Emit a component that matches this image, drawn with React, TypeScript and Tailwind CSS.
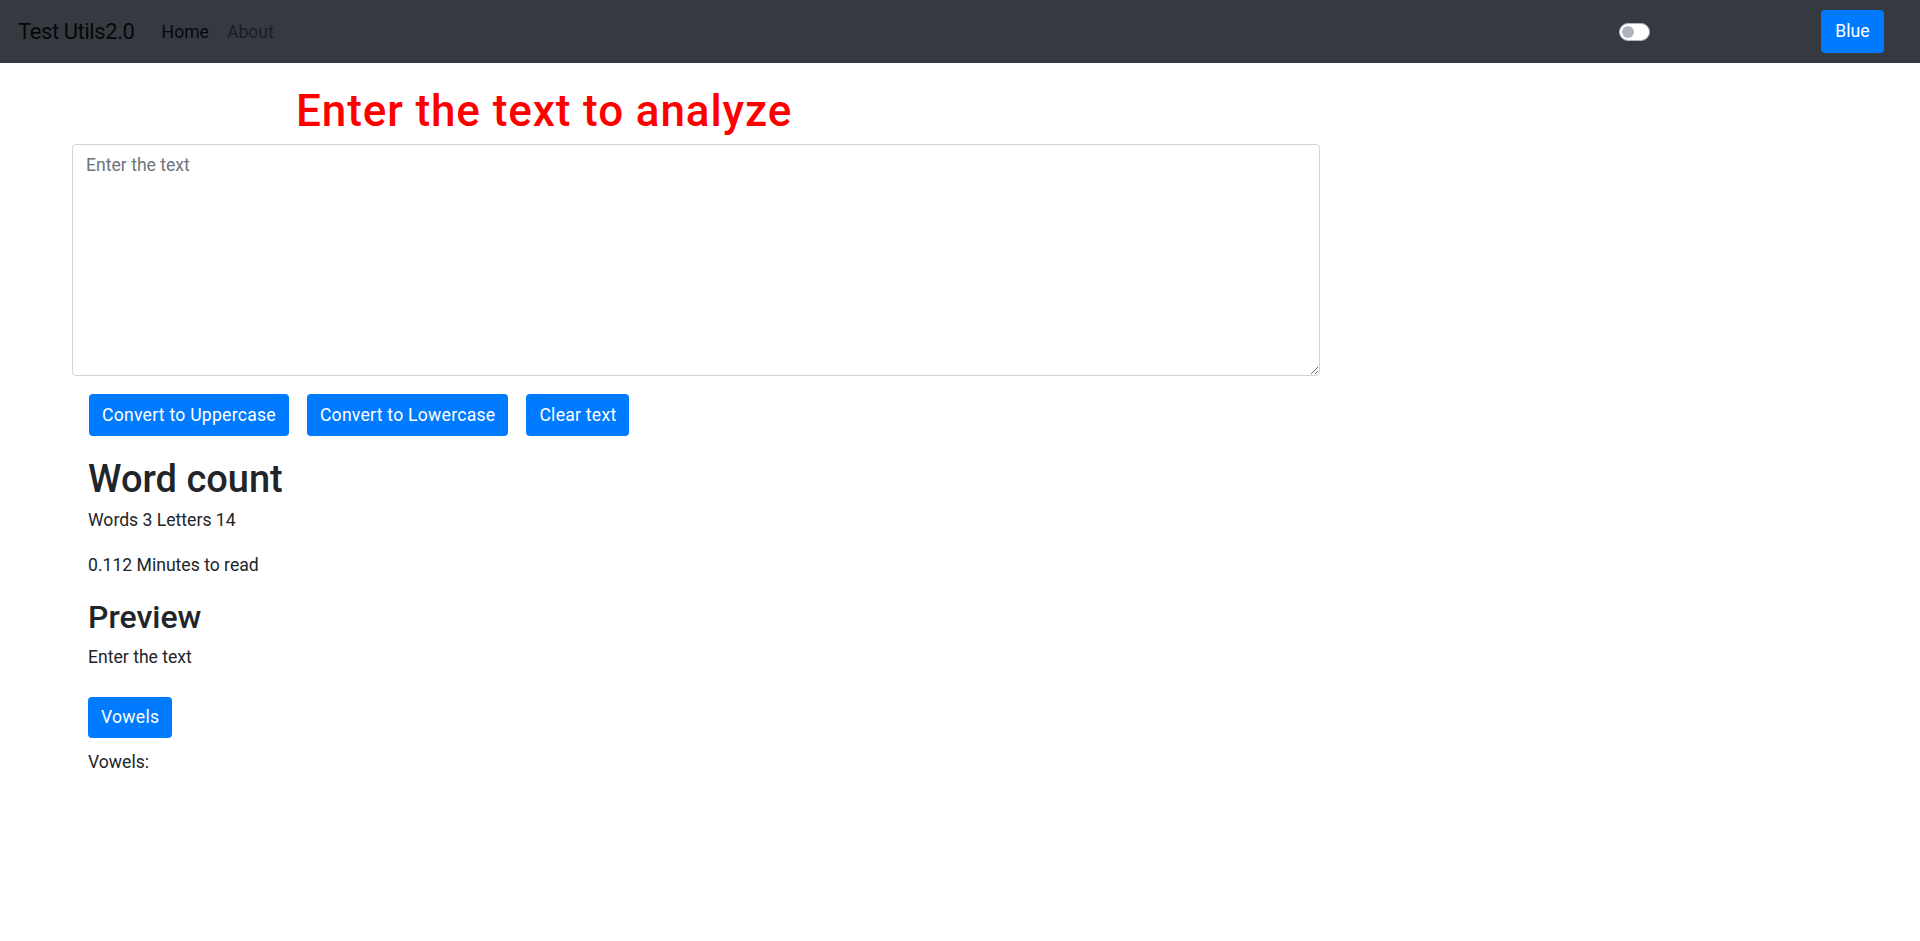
import { useState } from "react";

const font = { fontFamily: "Roboto, 'Noto Sans', sans-serif" };

const btn =
  "rounded-[4px] bg-[#007bff] px-[13px] text-[17.6px] tracking-[0.25px] text-white";

function App() {
  const [text, setText] = useState("");

  return (
    <div className="min-h-screen bg-white text-[#212529]" style={font}>
      <nav className="flex h-[63px] items-center bg-[#343a40] px-[18px]">
        <span className="text-[22px] leading-[33px] tracking-[-0.4px] text-black/90">Test Utils2.0</span>
        <div className="ml-[18px] flex text-[17.6px] leading-[26px]">
          <a className="px-[9px] text-black/90">Home</a>
          <a className="px-[9px] text-black/50">About</a>
        </div>
        <div className="ml-auto flex items-center">
          <div className="flex h-[18px] w-[31px] items-center rounded-full border border-[#adb5bd] bg-white px-[2px]">
            <div className="h-[12px] w-[12px] rounded-full bg-[#adb5bd]" />
          </div>
          <button
            type="button"
            className="ml-[171px] mr-[18px] h-[43px] w-[63px] rounded-[4px] bg-[#007bff] text-[17.6px] text-white"
          >
            Blue
          </button>
        </div>
      </nav>

      <main className="flex flex-col">
        <h1 className="ml-[296px] mt-[22px] text-[44px] font-medium leading-[53px] tracking-[0.9px] text-[red]">
          Enter the text to analyze
        </h1>
        <textarea
          value={text}
          onChange={(e) => setText(e.target.value)}
          placeholder="Enter the text"
          className="ml-[72px] mt-[6px] h-[232px] w-[1248px] rounded-[4px] border border-[#ced4da] px-[13px] py-[7px] text-[17.6px] leading-[26px] outline-none placeholder:text-[#6c757d]"
        />

        <div className="ml-[89px] mt-[18px] flex gap-[18px]">
          <button type="button" className={`h-[42px] ${btn}`}>
            Convert to Uppercase
          </button>
          <button type="button" className={`h-[42px] ${btn}`}>
            Convert to Lowercase
          </button>
          <button type="button" className={`h-[42px] ${btn}`}>
            Clear text
          </button>
        </div>

        <div className="ml-[88px] flex flex-col items-start">
          <h2 className="mt-[20px] text-[38px] font-medium leading-[46px]">Word count</h2>
          <p className="mt-[5px] text-[17.6px] leading-[26px]">Words 3 Letters 14</p>
          <p className="mt-[19px] text-[17.6px] leading-[26px]">0.112 Minutes to read</p>
          <h3 className="mt-[20px] text-[32px] font-medium leading-[38px]">Preview</h3>
          <p className="mt-[8px] text-[17.6px] leading-[26px]">Enter the text</p>
          <button type="button" className={`mt-[27px] h-[41px] ${btn}`}>
            Vowels
          </button>
          <p className="mt-[11px] text-[17.6px] leading-[26px]">Vowels:</p>
        </div>
      </main>
    </div>
  );
}

export default App;
